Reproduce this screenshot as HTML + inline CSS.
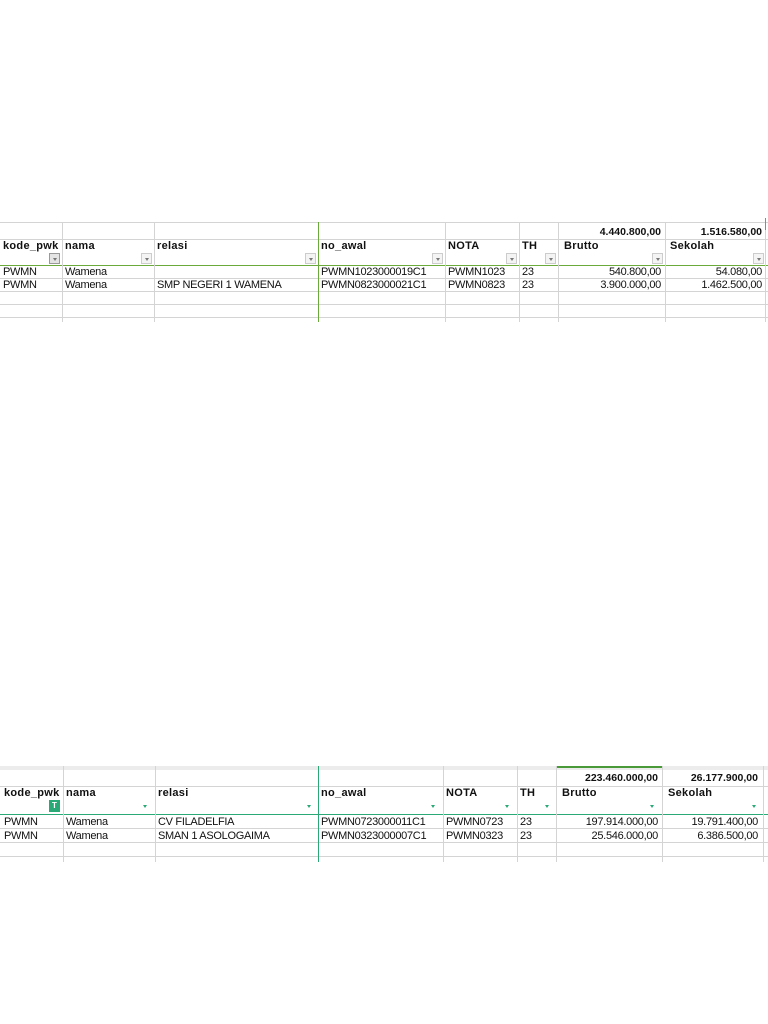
<!DOCTYPE html><html><head><meta charset="utf-8"><style>
body{margin:0;width:768px;height:1024px;background:#fff;position:relative;overflow:hidden;font-family:"Liberation Sans",Arial,sans-serif;font-size:11px;color:#111}
.h{position:absolute;height:1px;background:#d4d4d4}
.v{position:absolute;width:1px;background:#d4d4d4}
.t{position:absolute;white-space:nowrap;letter-spacing:-0.3px;line-height:13px}
.b{font-weight:bold;letter-spacing:0.3px;font-size:11px}
.tot{letter-spacing:0;font-size:10.5px}
.r{text-align:right}
.dd{position:absolute;width:11px;height:11px;border:1px solid #ccc;background:#f4f4f4;box-sizing:border-box}
.dd:after{content:"";position:absolute;left:2.5px;top:4px;border-left:2.5px solid transparent;border-right:2.5px solid transparent;border-top:3px solid #777}
.dg{position:absolute;width:10px;height:10px}
.dg:after{content:"";position:absolute;left:2px;top:4px;border-left:2.5px solid transparent;border-right:2.5px solid transparent;border-top:3px solid #2aa876}
</style></head><body>
<!-- TABLE 1 -->
<div class="h" style="left:0;top:222px;width:768px"></div>
<div class="h" style="left:0;top:239px;width:768px"></div>
<div class="h" style="left:0;top:278px;width:768px"></div>
<div class="h" style="left:0;top:291px;width:768px"></div>
<div class="h" style="left:0;top:304px;width:768px"></div>
<div class="h" style="left:0;top:317px;width:768px"></div>
<div class="h" style="left:0;top:265px;width:768px;background:#6aaa3a"></div>
<div class="v" style="left:62px;top:222px;height:100px"></div>
<div class="v" style="left:154px;top:222px;height:100px"></div>
<div class="v" style="left:318px;top:222px;height:100px;background:#6aaa3a"></div>
<div class="v" style="left:445px;top:222px;height:100px"></div>
<div class="v" style="left:519px;top:222px;height:100px"></div>
<div class="v" style="left:558px;top:222px;height:100px"></div>
<div class="v" style="left:665px;top:222px;height:100px"></div>
<div class="v" style="left:765px;top:218px;height:104px;background:#d4d4d4"></div>
<div class="v" style="left:765px;top:218px;height:12px;background:#6aaa3a"></div>
<div class="t b r tot" style="left:558px;width:103px;top:226px">4.440.800,00</div>
<div class="t b r tot" style="left:665px;width:97px;top:226px">1.516.580,00</div>
<div class="t b" style="left:3px;top:240px">kode_pwk</div>
<div class="t b" style="left:65px;top:240px">nama</div>
<div class="t b" style="left:157px;top:240px">relasi</div>
<div class="t b" style="left:321px;top:240px">no_awal</div>
<div class="t b" style="left:448px;top:240px">NOTA</div>
<div class="t b" style="left:522px;top:240px">TH</div>
<div class="t b" style="left:564px;top:240px">Brutto</div>
<div class="t b" style="left:670px;top:240px">Sekolah</div>
<div class="dd" style="left:49px;top:253px;border-color:#999;background:#e4e4e4"></div>
<div class="dd" style="left:141px;top:253px"></div>
<div class="dd" style="left:305px;top:253px"></div>
<div class="dd" style="left:432px;top:253px"></div>
<div class="dd" style="left:506px;top:253px"></div>
<div class="dd" style="left:545px;top:253px"></div>
<div class="dd" style="left:652px;top:253px"></div>
<div class="dd" style="left:753px;top:253px"></div>
<div class="t" style="left:3px;top:266px">PWMN</div><div class="t" style="left:65px;top:266px">Wamena</div>
<div class="t" style="left:321px;top:266px">PWMN1023000019C1</div><div class="t" style="left:448px;top:266px">PWMN1023</div><div class="t" style="left:522px;top:266px">23</div>
<div class="t r" style="left:558px;width:103px;top:266px">540.800,00</div><div class="t r" style="left:665px;width:97px;top:266px">54.080,00</div>
<div class="t" style="left:3px;top:279px">PWMN</div><div class="t" style="left:65px;top:279px">Wamena</div><div class="t" style="left:157px;top:279px">SMP NEGERI 1 WAMENA</div>
<div class="t" style="left:321px;top:279px">PWMN0823000021C1</div><div class="t" style="left:448px;top:279px">PWMN0823</div><div class="t" style="left:522px;top:279px">23</div>
<div class="t r" style="left:558px;width:103px;top:279px">3.900.000,00</div><div class="t r" style="left:665px;width:97px;top:279px">1.462.500,00</div>
<!-- TABLE 2 -->
<div class="h" style="left:0;top:766px;width:768px;height:4px;background:#ececec"></div>
<div class="h" style="left:0;top:786px;width:768px"></div>
<div class="h" style="left:0;top:828px;width:768px"></div>
<div class="h" style="left:0;top:842px;width:768px"></div>
<div class="h" style="left:0;top:856px;width:768px"></div>
<div class="h" style="left:0;top:814px;width:768px;background:#2aa876"></div>
<div class="h" style="left:556px;top:766px;width:106px;height:2px;background:#4a9a3a"></div>
<div class="v" style="left:63px;top:766px;height:96px"></div>
<div class="v" style="left:155px;top:766px;height:96px"></div>
<div class="v" style="left:318px;top:766px;height:96px;background:#2aa876"></div>
<div class="v" style="left:443px;top:766px;height:96px"></div>
<div class="v" style="left:517px;top:766px;height:96px"></div>
<div class="v" style="left:556px;top:766px;height:96px"></div>
<div class="v" style="left:662px;top:766px;height:96px"></div>
<div class="v" style="left:763px;top:766px;height:96px"></div>
<div class="t b r tot" style="left:556px;width:102px;top:772px">223.460.000,00</div>
<div class="t b r tot" style="left:662px;width:96px;top:772px">26.177.900,00</div>
<div class="t b" style="left:4px;top:787px">kode_pwk</div>
<div class="t b" style="left:66px;top:787px">nama</div>
<div class="t b" style="left:158px;top:787px">relasi</div>
<div class="t b" style="left:321px;top:787px">no_awal</div>
<div class="t b" style="left:446px;top:787px">NOTA</div>
<div class="t b" style="left:520px;top:787px">TH</div>
<div class="t b" style="left:562px;top:787px">Brutto</div>
<div class="t b" style="left:668px;top:787px">Sekolah</div>
<div style="position:absolute;left:49px;top:800px;width:11px;height:12px;background:#2aa876;color:#fff;font-size:8px;font-weight:bold;text-align:center;line-height:12px">T</div>
<div class="dg" style="left:141px;top:801px"></div>
<div class="dg" style="left:305px;top:801px"></div>
<div class="dg" style="left:429px;top:801px"></div>
<div class="dg" style="left:503px;top:801px"></div>
<div class="dg" style="left:543px;top:801px"></div>
<div class="dg" style="left:648px;top:801px"></div>
<div class="dg" style="left:750px;top:801px"></div>
<div class="t" style="left:4px;top:816px">PWMN</div><div class="t" style="left:66px;top:816px">Wamena</div><div class="t" style="left:158px;top:816px">CV FILADELFIA</div>
<div class="t" style="left:321px;top:816px">PWMN0723000011C1</div><div class="t" style="left:446px;top:816px">PWMN0723</div><div class="t" style="left:520px;top:816px">23</div>
<div class="t r" style="left:556px;width:102px;top:816px">197.914.000,00</div><div class="t r" style="left:662px;width:96px;top:816px">19.791.400,00</div>
<div class="t" style="left:4px;top:830px">PWMN</div><div class="t" style="left:66px;top:830px">Wamena</div><div class="t" style="left:158px;top:830px">SMAN 1 ASOLOGAIMA</div>
<div class="t" style="left:321px;top:830px">PWMN0323000007C1</div><div class="t" style="left:446px;top:830px">PWMN0323</div><div class="t" style="left:520px;top:830px">23</div>
<div class="t r" style="left:556px;width:102px;top:830px">25.546.000,00</div><div class="t r" style="left:662px;width:96px;top:830px">6.386.500,00</div>
</body></html>
